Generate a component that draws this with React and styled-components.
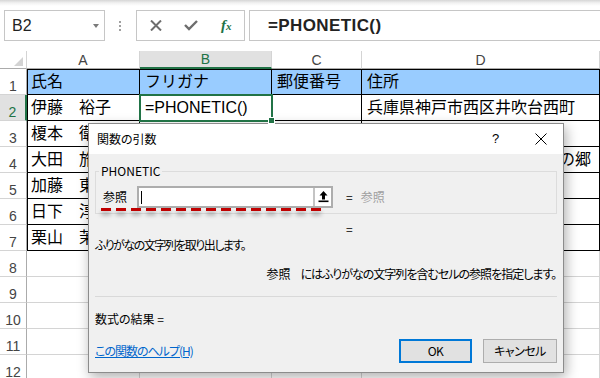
import styled, { createGlobalStyle } from "styled-components";

const GlobalStyle = createGlobalStyle`
  html, body { margin:0; padding:0; }
  body {
    width:600px;
    height:378px;
    overflow:hidden;
    background:#fff;
    font-family:"Liberation Sans","Noto Sans CJK JP",sans-serif;
  }
`;

const Screen = styled.div`
  position:relative;
  width:600px;
  height:378px;
  overflow:hidden;
  background:#fff;
`;

// ---- formula bar ----
const TopBar = styled.div`
  display:flex;
  align-items:flex-start;
  height:51px;
  box-sizing:border-box;
  padding:10px 0 0 4px;
  background:linear-gradient(#d6d6d6 0, #f2f2f2 3px, #fff 6px);
`;
const NameBox = styled.div`
  width:101px;
  height:31px;
  box-sizing:border-box;
  border:1px solid #c6c6c6;
  background:#fff;
  display:flex;
  align-items:center;
  justify-content:space-between;
  padding:0 5px 0 7px;
  font-size:16px;
  color:#222;
`;
const Caret = styled.span`
  width:0;
  height:0;
  border-left:3.5px solid transparent;
  border-right:3.5px solid transparent;
  border-top:4px solid #7a7a7a;
`;
const Grip = styled.div`
  width:2px;
  height:11px;
  margin:11px 15px 0 14px;
  background:repeating-linear-gradient(#a0a0a0 0 2px, transparent 2px 4px);
`;
const FxBox = styled.div`
  width:109px;
  height:31px;
  box-sizing:border-box;
  border:1px solid #c6c6c6;
  display:flex;
  align-items:center;
  padding-left:1px;
`;
const IconSlot = styled.div`
  width:36px;
  display:flex;
  justify-content:center;
  align-items:center;
`;
const FxText = styled.span`
  font-family:"Liberation Serif",serif;
  font-style:italic;
  font-weight:bold;
  color:#217346;
  font-size:15px;
  & small { font-size:11px; }
`;
const FormulaBox = styled.div`
  flex:1;
  margin-left:4px;
  height:31px;
  box-sizing:border-box;
  border:1px solid #c6c6c6;
  border-right:none;
  display:flex;
  align-items:center;
  padding-left:18px;
  font-weight:bold;
  font-size:17px;
  letter-spacing:0.4px;
  color:#222;
`;

// ---- sheet ----
const Sheet = styled.div`
  display:grid;
  grid-template-columns:27px 113px 132px 90px 238px;
  grid-template-rows:18px repeat(12, 26px);
`;
const Corner = styled.div`
  position:relative;
  border-right:1px solid #d4d4d4;
  border-bottom:1px solid #ababab;
  &::after {
    content:"";
    position:absolute;
    right:3px;
    bottom:2px;
    border-left:9px solid transparent;
    border-bottom:9px solid #d3d3d3;
  }
`;
const ColHead = styled.div`
  box-sizing:border-box;
  display:flex;
  justify-content:center;
  align-items:center;
  font-size:14px;
  color:${(p) => (p.$selected ? "#217346" : "#444")};
  background:${(p) => (p.$selected ? "#e1e1e1" : "#fff")};
  border-right:1px solid #d4d4d4;
  border-bottom:${(p) => (p.$selected ? "2px solid #217346" : "1px solid #ababab")};
`;
const RowHead = styled.div`
  box-sizing:border-box;
  display:flex;
  justify-content:center;
  align-items:flex-end;
  font-size:14px;
  line-height:14px;
  padding-bottom:1px;
  color:${(p) => (p.$selected ? "#217346" : "#444")};
  background:${(p) => (p.$selected ? "#e1e1e1" : "#fff")};
  border-bottom:1px solid #d4d4d4;
  border-right:${(p) => (p.$selected ? "2px solid #217346" : "1px solid #ababab")};
`;
const Cell = styled.div`
  position:relative;
  box-sizing:border-box;
  display:flex;
  align-items:center;
  padding-left:${(p) => (p.$col === 0 ? 4 : 5)}px;
  font-size:16px;
  line-height:18px;
  white-space:nowrap;
  color:#000;
  background:${(p) => (p.$fill ? "#99ccff" : "#fff")};
  border-right:1px solid ${(p) => (p.$table ? "#000" : "#d4d4d4")};
  border-bottom:1px solid ${(p) => (p.$table ? "#000" : "#d4d4d4")};
  box-shadow:${(p) =>
    p.$table ? `inset ${p.$col === 0 ? 1 : 0}px ${p.$row === 1 ? 1 : 0}px 0 #000` : "none"};
  ${(p) =>
    p.$active &&
    `
    outline:2px solid #217346;
    outline-offset:-1px;
    z-index:1;
    &::after {
      content:"";
      position:absolute;
      right:-4px;
      bottom:-4px;
      width:5px;
      height:5px;
      background:#217346;
      border:1px solid #fff;
    }
  `}
`;

// ---- dialog ----
const Dialog = styled.div`
  position:absolute;
  left:88px;
  top:123px;
  width:476px;
  height:250px;
  box-sizing:border-box;
  border:1px solid #8c8c8c;
  background:#f0f0f0;
  box-shadow:2px 4px 12px rgba(0,0,0,0.32);
  font-family:"Noto Sans CJK JP",sans-serif;
  font-feature-settings:"palt";
  font-size:12px;
  line-height:16px;
  color:#000;
  display:flex;
  flex-direction:column;
`;
const TitleBar = styled.div`
  height:30px;
  flex:none;
  background:#fff;
  display:flex;
  align-items:center;
  padding-left:8px;
`;
const Title = styled.div`
  flex:1;
`;
const TitleButton = styled.div`
  width:45px;
  display:flex;
  justify-content:center;
  align-items:center;
  font-family:"Liberation Sans",sans-serif;
  font-size:13px;
`;
const Body = styled.div`
  flex:1;
  padding:17px 6px 0 6px;
  display:flex;
  flex-direction:column;
`;
const GroupBox = styled.div`
  position:relative;
  height:43px;
  box-sizing:border-box;
  border:1px solid #dcdcdc;
  padding:14px 0 0 7px;
`;
const Legend = styled.span`
  position:absolute;
  top:-9px;
  left:3px;
  padding:0 2px;
  background:#f0f0f0;
`;
const ArgRow = styled.div`
  display:flex;
  align-items:center;
  height:22px;
`;
const ArgLabel = styled.div`
  width:34px;
`;
const RefInput = styled.div`
  width:196px;
  height:22px;
  box-sizing:border-box;
  border:2px solid #adadad;
  background:#fff;
  display:flex;
  align-items:stretch;
`;
const TextCaret = styled.div`
  flex:1;
  position:relative;
  &::before {
    content:"";
    position:absolute;
    left:2px;
    top:3px;
    width:1px;
    height:13px;
    background:#000;
  }
`;
const RefButton = styled.div`
  width:18px;
  box-sizing:border-box;
  border-left:2px solid #c4c4c4;
  display:flex;
  justify-content:center;
  align-items:center;
  background:#fff;
`;
const Equals = styled.span`
  margin-left:13px;
`;
const Hint = styled.span`
  margin-left:8px;
  color:#a0a0a0;
`;
const EqLine = styled.div`
  margin-top:7px;
  padding-left:251px;
`;
const Text = styled.div`
  margin-top:${(p) => p.$gap || 0}px;
  text-align:${(p) => (p.$right ? "right" : "left")};
  padding-right:${(p) => (p.$right ? 1 : 0)}px;
  letter-spacing:${(p) => p.$tight || 0}px;
`;
const ArgName = styled.span`
  margin-right:10px;
  letter-spacing:0;
`;
const Rule = styled.div`
  margin-top:14px;
  height:1px;
  background:#d9d9d9;
`;
const Footer = styled.div`
  margin-top:12px;
  display:flex;
  align-items:center;
  justify-content:space-between;
`;
const HelpLink = styled.a`
  color:#0066cc;
  text-decoration:underline;
  letter-spacing:-1px;
`;
const Buttons = styled.div`
  display:flex;
  gap:11px;
`;
const Button = styled.div`
  width:${(p) => p.$w}px;
  height:24px;
  box-sizing:border-box;
  border:${(p) => (p.$primary ? "2px solid #0078d7" : "1px solid #adadad")};
  background:#e1e1e1;
  display:flex;
  justify-content:center;
  align-items:center;
  letter-spacing:-0.5px;
`;

// annotation underline
const RedDashes = styled.div`
  position:absolute;
  left:101px;
  top:208px;
  width:220px;
  height:3px;
  background:repeating-linear-gradient(90deg, #c00000 0 10px, transparent 10px 15px);
  filter:drop-shadow(0 4px 2px rgba(0,0,0,0.35));
`;

const columns = ["A", "B", "C", "D"];
const rows = [
  ["氏名", "フリガナ", "郵便番号", "住所"],
  ["伊藤　裕子", "=PHONETIC()", "", "兵庫県神戸市西区井吹台西町"],
  ["榎本　衛", "", "", "大阪府大阪市北区梅田"],
  ["大田　旅人", "", "", "長野県北佐久郡軽井沢町緑の郷"],
  ["加藤　東子", "", "", "京都府京都市左京区"],
  ["日下　淳", "", "", "福岡県福岡市博多区"],
  ["栗山　茉莉", "", "", "東京都港区赤坂"],
  ["", "", "", ""],
  ["", "", "", ""],
  ["", "", "", ""],
  ["", "", "", ""],
  ["", "", "", ""],
];

const CrossIcon = () => (
  <svg width="12" height="11" viewBox="0 0 12 11">
    <path d="M1 0.5 L11 10.5 M11 0.5 L1 10.5" stroke="#6d6d6d" strokeWidth="2" />
  </svg>
);
const CheckIcon = () => (
  <svg width="14" height="11" viewBox="0 0 14 11">
    <path d="M1 5 L5 9 L13 1" stroke="#6d6d6d" strokeWidth="2.4" fill="none" />
  </svg>
);
const CloseIcon = () => (
  <svg width="12" height="12" viewBox="0 0 12 12">
    <path d="M0.5 0.5 L11.5 11.5 M11.5 0.5 L0.5 11.5" stroke="#000" strokeWidth="1" />
  </svg>
);
const CollapseIcon = () => (
  <svg width="11" height="12" viewBox="0 0 11 12">
    <path d="M5.5 0 L1.5 4.5 H4 V8.5 H7 V4.5 H9.5 Z" fill="#000" />
    <rect x="0.5" y="9.5" width="10" height="1.6" fill="#000" />
  </svg>
);

export default function App() {
  return (
    <Screen>
      <GlobalStyle />
      <TopBar>
        <NameBox>
          B2
          <Caret />
        </NameBox>
        <Grip />
        <FxBox>
          <IconSlot><CrossIcon /></IconSlot>
          <IconSlot><CheckIcon /></IconSlot>
          <IconSlot>
            <FxText>f<small>x</small></FxText>
          </IconSlot>
        </FxBox>
        <FormulaBox>=PHONETIC()</FormulaBox>
      </TopBar>

      <Sheet>
        <Corner />
        {columns.map((c) => (
          <ColHead key={c} $selected={c === "B"}>{c}</ColHead>
        ))}
        {rows.map((r, i) => [
          <RowHead key={"h" + i} $selected={i === 1}>{i + 1}</RowHead>,
          ...r.map((v, j) => (
            <Cell
              key={i + "-" + j}
              $col={j}
              $row={i + 1}
              $table={i < 7}
              $fill={i === 0}
              $active={i === 1 && j === 1}
            >
              {v}
            </Cell>
          )),
        ])}
      </Sheet>

      <Dialog>
        <TitleBar>
          <Title>関数の引数</Title>
          <TitleButton>?</TitleButton>
          <TitleButton><CloseIcon /></TitleButton>
        </TitleBar>
        <Body>
          <GroupBox>
            <Legend>PHONETIC</Legend>
            <ArgRow>
              <ArgLabel>参照</ArgLabel>
              <RefInput>
                <TextCaret />
                <RefButton><CollapseIcon /></RefButton>
              </RefInput>
              <Equals>=</Equals>
              <Hint>参照</Hint>
            </ArgRow>
          </GroupBox>
          <EqLine>=</EqLine>
          <Text $tight={-1.5}>ふりがなの文字列を取り出します。</Text>
          <Text $gap={13} $right $tight={-1}>
            <ArgName>参照</ArgName>にはふりがなの文字列を含むセルの参照を指定します。
          </Text>
          <Rule />
          <Text $gap={14}>数式の結果 =</Text>
          <Footer>
            <HelpLink>この関数のヘルプ(H)</HelpLink>
            <Buttons>
              <Button $w={73} $primary>OK</Button>
              <Button $w={74}>キャンセル</Button>
            </Buttons>
          </Footer>
        </Body>
      </Dialog>
      <RedDashes />
    </Screen>
  );
}
